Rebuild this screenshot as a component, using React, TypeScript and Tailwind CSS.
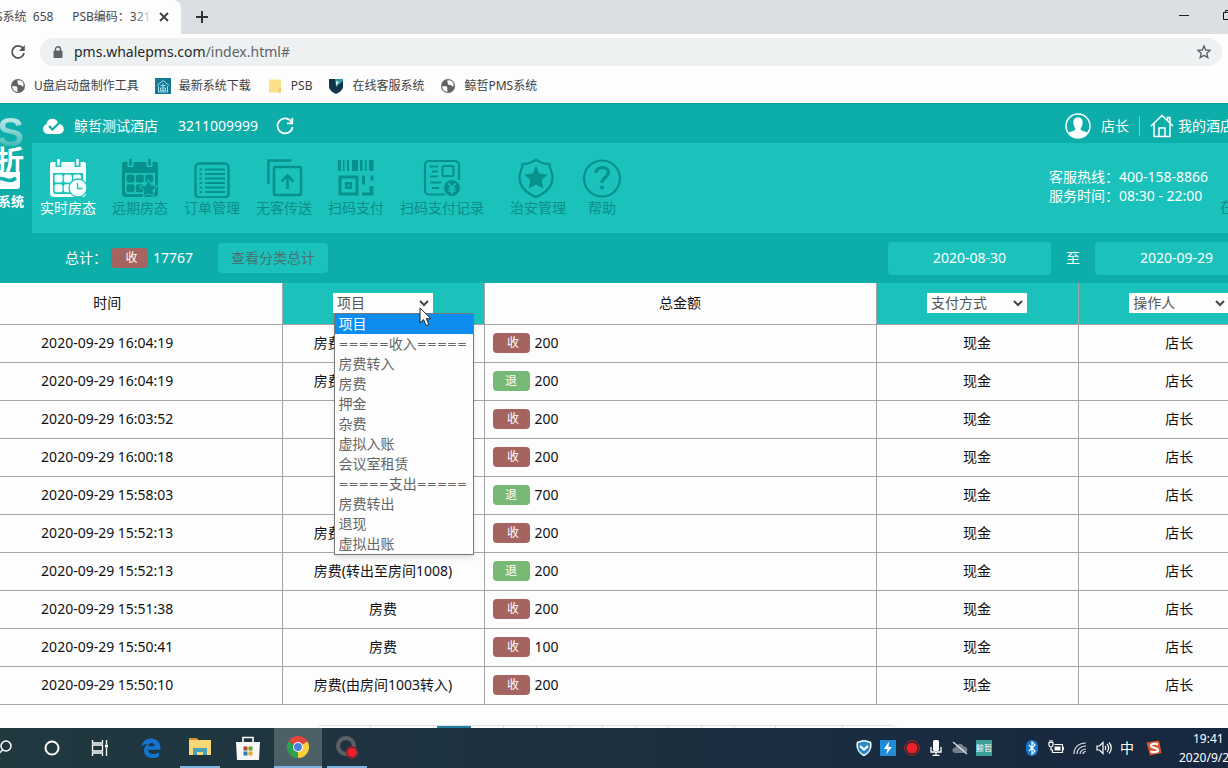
import type { ReactNode } from 'react';

const D = '#06918d';

type Row = { time: string; item: string; kind: 'in' | 'out'; amount: number };

const rows: Row[] = [
  { time: '2020-09-29 16:04:19', item: '房费(由房间1008转入)', kind: 'in', amount: 200 },
  { time: '2020-09-29 16:04:19', item: '房费(转出至房间1003)', kind: 'out', amount: 200 },
  { time: '2020-09-29 16:03:52', item: '房费', kind: 'in', amount: 200 },
  { time: '2020-09-29 16:00:18', item: '房费', kind: 'in', amount: 200 },
  { time: '2020-09-29 15:58:03', item: '退现', kind: 'out', amount: 700 },
  { time: '2020-09-29 15:52:13', item: '房费(由房间1003转入)', kind: 'in', amount: 200 },
  { time: '2020-09-29 15:52:13', item: '房费(转出至房间1008)', kind: 'out', amount: 200 },
  { time: '2020-09-29 15:51:38', item: '房费', kind: 'in', amount: 200 },
  { time: '2020-09-29 15:50:41', item: '房费', kind: 'in', amount: 100 },
  { time: '2020-09-29 15:50:10', item: '房费(由房间1003转入)', kind: 'in', amount: 200 },
];

const options = ['项目', '=====收入=====', '房费转入', '房费', '押金', '杂费', '虚拟入账', '会议室租赁', '=====支出=====', '房费转出', '退现', '虚拟出账'];

function Globe() {
  return (
    <svg className="size-4 shrink-0" viewBox="0 0 16 16">
      <circle cx="8" cy="8" r="7" fill="#5f6368" />
      <path d="M2.500 7.500c1.500 1.500 3.500 0 4.500 1.500s-.5 2.500 1 4.700c-3.500.4-6.200-2.600-5.500-6.200zM7.500 2.500c2-.8 4.500.3 5.500 2 .8 1.300.7 3 0 4.200-1-.2-1.500-1.500-2.800-1.600-1.600-.1-2.800-.6-2.400-1.800.2-.8-1-1.800-.3-2.800z" fill="#fdfdfd" />
    </svg>
  );
}

function Bookmark({ icon, label }: { icon: ReactNode; label: string }) {
  return (
    <a href="#" className="flex items-center gap-2">
      {icon}
      <span>{label}</span>
    </a>
  );
}

function Browser() {
  return (
    <div className="shrink-0 bg-[#fdfdfd]">
      <div className="flex h-[34px] bg-[#dbdfe3]">
        <div className="flex w-[181px] shrink-0 items-center rounded-tr-lg bg-[#fdfdfd]">
          <span className="-ml-1 flex w-[154px] items-center overflow-hidden whitespace-pre text-xs text-[#45494d]">
            <span>S系统  658      PSB编码：3</span>
            <span className="text-[#85888b]">2</span>
            <span className="text-[#c5c7c9]">1</span>
          </span>
          <button aria-label="关闭标签页" className="ml-2">
            <svg className="size-3" viewBox="0 0 12 12" stroke="#3c4043" strokeWidth="1.800"><path d="M2 2l8 8M10 2l-8 8" /></svg>
          </button>
        </div>
        <button aria-label="新标签页" className="ml-3.5">
          <svg className="size-3.5" viewBox="0 0 14 14" stroke="#303336" strokeWidth="2"><path d="M7 1v12M1 7h12" /></svg>
        </button>
        <div className="flex-1" />
        <button aria-label="最小化" className="mb-1 mr-8">
          <svg className="size-3" viewBox="0 0 12 12" stroke="#222"><path d="M1 6.500h10" /></svg>
        </button>
        <button aria-label="还原" className="-mr-1.5 mb-1">
          <svg className="size-3" viewBox="0 0 12 12" fill="none" stroke="#111"><path d="M1.500 3.500h7v7h-7zM3.500 3.500v-2h7v7h-2" /></svg>
        </button>
      </div>
      <div className="flex h-9 items-center pl-2.5 pr-1.5">
        <button aria-label="重新加载" className="mr-3.5">
          <svg className="size-4" viewBox="0 0 16 16" fill="none" stroke="#54585c" strokeWidth="1.800"><path d="M13 4.500A6 6 0 1 0 14 9" /><path d="M14.800 1v6H8.800z" fill="#54585c" stroke="none" /></svg>
        </button>
        <div className="flex h-7 flex-1 items-center rounded-full bg-[#edf1f2] pl-[13px] pr-2.5">
          <svg className="mr-[11px] h-3 w-2.5" viewBox="0 0 10 12"><rect x="0.500" y="4.500" width="9" height="7.500" rx="1" fill="#5f6368" /><path d="M2.500 5V3.200a2.500 2.500 0 0 1 5 0V5" fill="none" stroke="#5f6368" strokeWidth="1.400" /></svg>
          <span className="flex-1 text-sm text-[#5f6368]"><span className="text-[#25282b]">pms.whalepms.com</span>/index.html#</span>
          <button aria-label="收藏">
            <svg className="size-4" viewBox="0 0 16 16" fill="none" stroke="#5f6368" strokeWidth="1.400"><path d="M8 2l1.700 4 4.300.4-3.200 2.900 1 4.200L8 11.300l-3.800 2.200 1-4.200L2 6.400 6.300 6z" /></svg>
          </button>
        </div>
      </div>
      <div className="flex h-[33px] items-center gap-4 pb-0.5 pl-2.5 text-xs text-[#3c4043]">
        <Bookmark icon={<Globe />} label="U盘启动盘制作工具" />
        <Bookmark icon={<svg className="size-4" viewBox="0 0 16 16" fill="none" stroke="#a4dded"><rect width="16" height="16" fill="#157796" stroke="none" /><path d="M2 7.500l6-5 6 5M3.500 8v6h9V8M5.500 7.500h5M5.500 10h5v2.500h-5zM8 5.500v7" /></svg>} label="最新系统下载" />
        <Bookmark icon={<svg className="size-4" viewBox="0 0 16 16"><path d="M2 1.500h12v13H2z" fill="#fbe08a" /><path d="M12.500 10H14v4.500h-3z" fill="#eecd6a" /></svg>} label="PSB" />
        <Bookmark icon={<svg className="size-4" viewBox="0 0 16 16"><path d="M1 1h14v7c0 4-3 6-7 8-4-2-7-4-7-8z" fill="#12344a" /><path d="M7 1h8v2L8 9z" fill="#2e9aa0" /><path d="M8 3v5l3-4z" fill="#d6f3f2" /></svg>} label="在线客服系统" />
        <Bookmark icon={<Globe />} label="鲸哲PMS系统" />
      </div>
    </div>
  );
}

function Calendar({ color, star }: { color: string; star?: boolean }) {
  return (
    <svg className="size-10" viewBox="0 0 40 40">
      <path d="M2 6a2 2 0 0 1 2-2h32a2 2 0 0 1 2 2v29a4 4 0 0 1-4 4H6a4 4 0 0 1-4-4z" fill={color} />
      <path d="M7.500 3h6v6h-6zM26.500 3h6v6h-6z" fill="#1bc2bc" />
      <path d="M9.200 1h2.600v6.500H9.200zM28.200 1h2.600v6.500h-2.600z" fill={color} />
      <path d="M5 15h30v18a3 3 0 0 1-3 3H8a3 3 0 0 1-3-3z" fill="#1bc2bc" />
      {[0, 1, 2].map((i) => [0, 1].map((j) => <rect key={`${i}${j}`} x={6.500 + i * 9.300} y={16.500 + j * 9.700} width="8" height="8" rx="2" fill={color} />))}
      {star ? (
        <path d="M28.500 22.500l2.400 5.100 5.600.7-4.100 3.900 1 5.500-4.900-2.700-4.900 2.700 1-5.500-4.100-3.900 5.600-.7z" fill={color} stroke="#1bc2bc" strokeWidth="1.600" paintOrder="stroke" />
      ) : (
        <g><circle cx="30" cy="30" r="9" fill={color} stroke="#1bc2bc" strokeWidth="1.300" /><path d="M29.500 25v5.500h5" fill="none" stroke="#1bc2bc" strokeWidth="1.300" /></g>
      )}
    </svg>
  );
}

const nav: { label: string; gap: string; icon: ReactNode }[] = [
  { label: '实时房态', gap: 'ml-2', icon: <Calendar color="#f4ffff" /> },
  { label: '远期房态', gap: 'ml-4', icon: <Calendar color={D} star /> },
  { label: '订单管理', gap: 'ml-4', icon: <svg className="size-10" viewBox="0 0 40 40" fill="none" stroke={D} strokeWidth="2.500"><rect x="3.500" y="5.500" width="33" height="34" rx="4" /><path d="M13 11.500H33M13 16H33M13 20.500H33M13 25H33M13 29.500H33M13 34H33" strokeWidth="1.900" /><path d="M7.500 11.500H10M7.500 16H10M7.500 20.500H10M7.500 25H10M7.500 29.500H10M7.500 34H10" strokeWidth="2.200" /></svg> },
  { label: '无客传送', gap: 'ml-4', icon: <svg className="size-10" viewBox="0 0 40 40" fill="none" stroke={D} strokeWidth="2.600"><path d="M4.500 26V2.500h23" /><rect x="10" y="9" width="27" height="28" rx="1.500" /><path d="M23.500 31V18M17.500 23.500l6-6 6 6" /></svg> },
  { label: '扫码支付', gap: 'ml-4', icon: <svg className="size-10" viewBox="0 0 40 40" fill={D}><path d="M2 2h3v11H2zM7 2h1.500v11H7zM11 2h2v11h-2zM16 2h6v11h-6zM24 2h2.500v11H24zM29 2h1.500v11H29zM33 2h4.500v11H33z" /><path d="M4 19h17v17H4z" fill="none" stroke={D} strokeWidth="3" /><path d="M10.200 25.200h4.600v4.600h-4.600z" fill="none" stroke={D} strokeWidth="2.500" /><path d="M26 17.500h3v9h-3zM26 34.500h7.500V28h4v9.500H26zM34.500 17.500h3v5h-3z" /></svg> },
  { label: '扫码支付记录', gap: 'ml-4', icon: <svg className="size-10" viewBox="0 0 40 40" fill="none" stroke={D} strokeWidth="2.200"><path d="M23 36.500H7a4 4 0 0 1-4-4V7a4 4 0 0 1 4-4h26a4 4 0 0 1 4 4v15" /><rect x="20.500" y="8" width="11" height="10" rx="1.500" /><path d="M8 8.500h8M10 13.500h6M8 18.500h8M8 24.500h11M10 30h7" /><circle cx="30" cy="30" r="8" fill={D} stroke="none" /><path d="M26.500 25.500l3.500 4.500 3.500-4.500M30 30v6M26.500 30.500h7M26.500 33h7" stroke="#1bc2bc" strokeWidth="1.500" /></svg> },
  { label: '治安管理', gap: 'ml-[26px]', icon: <svg className="size-10 -translate-x-0.5" viewBox="0 0 40 40"><path d="M20 1.500c4 3.300 8.500 4.500 13.500 4.500 0 6 3 7 3 13 0 9-6.500 16-16.500 20C10 35 3.500 28 3.500 19c0-6 3-7 3-13 5 0 9.500-1.200 13.500-4.500z" fill="none" stroke={D} strokeWidth="2.200" /><path d="M20 8l3.500 7.500 8.200 1-6 5.700 1.600 8.200L20 26.400l-7.300 4 1.600-8.200-6-5.700 8.200-1z" fill={D} /></svg> },
  { label: '帮助', gap: 'ml-4', icon: <svg className="size-10" viewBox="0 0 40 40" fill="none" stroke={D}><circle cx="20" cy="20.500" r="18" strokeWidth="2.200" /><path d="M14 15c0-7.500 12.500-7 12.500-.5 0 5-6.500 4.800-6.500 10.500" strokeWidth="3.200" /><circle cx="20" cy="29.500" r="2.100" fill={D} stroke="none" /></svg> },
];

function Header() {
  return (
    <header className="flex h-[130px] shrink-0 border-t border-[#0f9f9c] bg-[#0dadaa] text-sm text-white">
      <div className="flex w-8 shrink-0 flex-col items-end overflow-hidden whitespace-nowrap pr-2 pt-3">
        <span className="h-8 bg-linear-to-b from-[#c5eeec] to-[#2bb7b4] bg-clip-text font-[Liberation_Sans,sans-serif] text-[40px]/8 font-bold text-transparent">PMS</span>
        <span className="h-6 text-[28px]/6 font-bold">折</span>
        <svg className="mr-1 h-[17px] w-10" viewBox="0 0 40 17"><path d="M0 0h40v14a3 3 0 0 1-3 3H0z" fill="#fff" /><path d="M15 9c8-7 12 4 21-3" fill="none" stroke="#0dadaa" strokeWidth="3.500" /></svg>
        <span className="mt-1 text-[13px]/4 font-bold">管理系统</span>
      </div>
      <div className="flex min-w-0 flex-1 flex-col">
        <div className="flex h-[39px] shrink-0 items-center whitespace-nowrap pl-2.5 pt-1">
          <svg className="size-[22px]" viewBox="0 0 22 22"><path d="M5.500 19a5 5 0 0 1-1-9.700C5 2.500 14 2 16 7.500c1 .2 1.500.8 1.500 1.500C23.500 10 23 19 17 19z" fill="#fff" /><path d="M7 11l3.500 3.500L18 7" fill="none" stroke="#0dadaa" strokeWidth="2.200" /></svg>
          <span className="ml-2.5">鲸哲测试酒店</span>
          <span className="ml-5">3211009999</span>
          <button aria-label="刷新" className="ml-[18px]"><svg className="size-[18px]" viewBox="0 0 18 18" fill="none" stroke="#fff" strokeWidth="1.800"><path d="M15.500 5A7.500 7.500 0 1 0 16.500 10" /><path d="M16.300 1v5.300H11" /></svg></button>
          <div className="flex-1" />
          <svg className="size-[26px]" viewBox="0 0 26 26"><circle cx="13" cy="13" r="12" fill="none" stroke="#fff" strokeWidth="1.500" /><path d="M13 4.500c4 0 5 3 4.500 6-.2 2.500-1 4-2 5 .2 3 5.500 2.500 7 4.500-4.500 6.500-14.500 6.500-19 0 1.500-2 6.800-1.500 7-4.500-1-1-1.800-2.500-2-5-.5-3 .5-6 4.500-6z" fill="#fff" /></svg>
          <span className="ml-2.5">店长</span>
          <span className="mx-2.5 h-5 w-px bg-[#6ccfcc]" />
          <svg className="size-6" viewBox="0 0 24 24" fill="none" stroke="#fff" strokeWidth="1.500"><path d="M1 12L12 1.500 23 12M4 9.500V22.500h16V9.500M9 22.500V14h6v8.500M17.500 7V3.500H20V9" /></svg>
          <span className="-mr-1.5 ml-1">我的酒店</span>
        </div>
        <nav className="flex min-h-0 flex-1 bg-[#1bc2bc]">
          {nav.map((n, i) => (
            <a key={n.label} href="#" className={`${n.gap} flex shrink-0 flex-col items-center pt-[15px] ${i ? 'text-[#0b8d89]' : 'text-white'}`}>
              {n.icon}
              <span className="leading-5">{n.label}</span>
            </a>
          ))}
          <div className="flex-1" />
          <div className="w-[163px] shrink-0 pt-6 leading-[19px]">
            <div>客服热线：400-158-8866</div>
            <div>服务时间：08:30 - 22:00</div>
          </div>
          <span className="-mr-1.5 ml-2 shrink-0 pt-[54px] text-[#0b8d89]">在</span>
        </nav>
      </div>
    </header>
  );
}

function Filter({ label, id }: { label: string; id: string }) {
  return (
    <div className="relative mx-auto w-[100px]">
      <select id={id} aria-label={label} className="block h-5 w-full appearance-none bg-[#fdfdfd] pl-1 text-sm/5 font-normal text-[#555]">
        <option>{label}</option>
      </select>
      <svg className="pointer-events-none absolute right-1 top-1.5 h-2 w-2.5" viewBox="0 0 10 8" fill="none" stroke="#444" strokeWidth="2"><path d="M1 2l4 4 4-4" /></svg>
    </div>
  );
}

function OptionText({ text }: { text: string }) {
  if (!text.startsWith('=')) return <>{text}</>;
  return (
    <span className="flex items-center">
      <span className="font-[DejaVu_Sans,sans-serif] text-xs/5">=====</span>
      {text.replaceAll('=', '')}
      <span className="font-[DejaVu_Sans,sans-serif] text-xs/5">=====</span>
    </span>
  );
}

function Tag({ kind }: { kind: 'in' | 'out' }) {
  return kind === 'in'
    ? <span className="inline-block h-5 w-[37px] rounded bg-[#a5645f] pl-1 text-center text-xs/5 text-white">收</span>
    : <span className="inline-block h-5 w-[37px] rounded bg-[#77b974] text-center text-xs/5 text-white">退</span>;
}

function Ledger() {
  return (
    <div className="-ml-[67px] -mr-[52px]">
      <table className="w-full table-fixed border-collapse text-center text-sm text-[#111]">
        <colgroup><col className="w-[349px]" /><col className="w-[202px]" /><col /><col className="w-[202px]" /><col className="w-[202px]" /></colgroup>
        <thead>
          <tr className="h-[41px] border-b border-[#a5a5a5]">
            <th className="border-r border-[#a5a5a5] font-normal">时间</th>
            <th className="border-r border-[#a5a5a5] bg-[#1bc2bc]">
              <div className="relative">
                <Filter id="item" label="项目" />
                <ul role="listbox" aria-label="项目" className="absolute left-[51px] top-5 z-10 w-[140px] border border-[#777] bg-[#fdfdfd] text-left text-sm/5 font-normal text-[#666] shadow-md">
                  {options.map((o, i) => (
                    <li key={o} role="option" aria-selected={i === 0} className={`h-5 whitespace-nowrap pl-1 ${i === 0 ? 'bg-[#0d8df0] text-white' : ''}`}><OptionText text={o} /></li>
                  ))}
                </ul>
                <svg className="absolute left-[136px] top-3.5 z-20 h-5 w-3.5" viewBox="0 0 14 20"><path d="M1 1v15l3.600-3.400 2.500 6 2.700-1.100-2.500-5.800H12z" fill="#fff" stroke="#222" /></svg>
              </div>
            </th>
            <th className="border-r border-[#a5a5a5] font-normal">总金额</th>
            <th className="border-r border-[#a5a5a5] bg-[#1bc2bc]"><Filter id="pay" label="支付方式" /></th>
            <th className="bg-[#1bc2bc]"><Filter id="operator" label="操作人" /></th>
          </tr>
        </thead>
        <tbody>
          {rows.map((r, i) => (
            <tr key={i} className="h-[38px] border-b border-[#a5a5a5]">
              <td className="border-r border-[#a5a5a5]">{r.time}</td>
              <td className="border-r border-[#a5a5a5]">{r.item}</td>
              <td className="border-r border-[#a5a5a5]"><div className="flex items-center gap-[5px] pl-2"><Tag kind={r.kind} />{r.amount}</div></td>
              <td className="border-r border-[#a5a5a5]">现金</td>
              <td>店长</td>
            </tr>
          ))}
        </tbody>
      </table>
    </div>
  );
}

function Taskbar() {
  return (
    <footer className="flex h-10 shrink-0 items-center bg-linear-to-r from-[#21383f] to-[#17273f] text-white">
      <button aria-label="搜索" className="-ml-1 w-4"><svg className="size-4" viewBox="0 0 16 16" fill="none" stroke="#fff" strokeWidth="1.500"><circle cx="10" cy="6" r="5" /><path d="M6.500 10L1 15.500" /></svg></button>
      <button aria-label="Cortana" className="ml-4 flex w-12 justify-center"><svg className="size-4" viewBox="0 0 16 16" fill="none" stroke="#fff" strokeWidth="2"><circle cx="8" cy="8" r="6.500" /></svg></button>
      <button aria-label="任务视图" className="flex w-12 justify-center"><svg className="size-[18px]" viewBox="0 0 18 18" fill="none" stroke="#fff" strokeWidth="1.300"><path d="M1.500 1v3h10V1M1.500 17v-3h10v3M1.500 6h10v6h-10zM15.500 1v4M15.500 9v8" /><path d="M14 5.500h3v3h-3z" fill="#fff" stroke="none" /></svg></button>
      <button aria-label="Edge" className="ml-[3px] flex w-12 justify-center"><svg className="size-5" viewBox="0 0 20 20"><path d="M.5 9C1 3.500 5 .5 10 .5c6 0 9.500 4 9.500 9v2.200H7.200c0 3 2.500 4.200 5.300 4.200 2.300 0 4-.6 5.500-1.400v4c-2 1-4 1.500-6.500 1.500C6 20 3 17 3 12.500c0-3 1.500-5.200 4-6.500C4 6 1.800 7 .5 9zM7.300 8.200h6.200c0-2-1-3.300-3-3.300S7.500 6.300 7.300 8.200z" fill="#1473cf" /></svg></button>
      <button aria-label="文件资源管理器" className="ml-[5px] flex h-full w-10 items-center justify-center border-b-2 border-[#7fb4e3]"><svg className="h-5 w-[22px]" viewBox="0 0 22 20"><path d="M0 1h8l1.500 2H0z" fill="#d9932b" /><path d="M0 3h22v15H0z" fill="#f8d775" /><path d="M4 18v-7h14v7h-4v-3H8v3z" fill="#4ba0b8" /></svg></button>
      <button aria-label="Microsoft Store" className="ml-1 flex w-12 justify-center"><svg className="size-6" viewBox="0 0 24 24"><path d="M7 8V1.500h10V8" fill="none" stroke="#fff" strokeWidth="1.600" /><path d="M0 6h24l-1 18H1z" fill="#f7f7f7" /><path d="M7.500 10.500h4v4h-4z" fill="#b34a26" /><path d="M12.500 10.500h4v4h-4z" fill="#6f9e28" /><path d="M7.500 15.500h4v4h-4z" fill="#267fb3" /><path d="M12.500 15.500h4v4h-4z" fill="#e6ac1c" /></svg></button>
      <button aria-label="Chrome" className="ml-0.5 flex h-full w-12 items-center justify-center border-b-2 border-[#7fb4e3] bg-[#4c6066]"><svg className="size-[22px]" viewBox="0 0 24 24"><path d="M12 12L1.600 6A12 12 0 0 1 22.400 6z" fill="#e2453a" /><path d="M12 12V24A12 12 0 0 1 1.600 6z" fill="#2da350" /><path d="M12 12l10.400-6A12 12 0 0 1 12 24z" fill="#fbce3c" /><circle cx="12" cy="12" r="5.500" fill="#fff" /><circle cx="12" cy="12" r="4.300" fill="#4b80dc" /></svg></button>
      <button aria-label="录屏" className="ml-[5px] flex h-full w-10 items-center justify-center border-b-2 border-[#7fb4e3]"><svg className="size-6" viewBox="0 0 24 24"><circle cx="11" cy="11" r="8" fill="none" stroke="#5c6063" strokeWidth="4" /><circle cx="17" cy="17.500" r="6" fill="#21383f" stroke="#b5232b" /><circle cx="17" cy="17.500" r="4.700" fill="#f0202a" /></svg></button>
      <div className="flex-1" />
      <div className="flex items-center gap-2">
        <svg className="size-4" viewBox="0 0 16 16"><path d="M8 .5l6.500 2C16 9 12 13.500 8 15.500 4 13.500 0 9 1.500 2.500z" fill="#2f86c4" stroke="#e9f6ff" strokeWidth="1.600" /><path d="M4 6l4 3.500L12 6" fill="none" stroke="#fff" strokeWidth="2.200" /></svg>
        <svg className="size-4" viewBox="0 0 16 16"><path d="M0 0h16v16H0z" fill="#208cd8" /><path d="M9 1.500L4 9h3.500L6 14.500 12 7H8.500z" fill="#fff" /></svg>
        <svg className="size-4" viewBox="0 0 16 16"><circle cx="8" cy="8" r="7.300" fill="#21232f" stroke="#ac2931" /><circle cx="8" cy="8" r="5.600" fill="#e8202a" /></svg>
        <svg className="size-4" viewBox="0 0 16 16"><rect x="5" width="6" height="11" rx="1.500" fill="#fff" /><path d="M3 7v5h10V7M8 12v3M4.500 15.300h7" fill="none" stroke="#fff" strokeWidth="1.300" /></svg>
        <svg className="size-4" viewBox="0 0 16 16"><path d="M3 13C-1 12 0 7 3.500 7.500 5 2 11 3 11.500 6.500c5 0 5 6.500 1 6.500z" fill="#75808b" /><path d="M1 2l14 12" stroke="#e1e5e9" strokeWidth="1.200" /></svg>
        <span className="flex size-4 items-center justify-center overflow-hidden whitespace-nowrap bg-[#3c9d99] text-[8px]/4">鲸哲</span>
      </div>
      <div className="ml-8 flex items-center gap-2">
        <svg className="size-4" viewBox="0 0 16 16"><rect x="2" width="12" height="16" rx="6" fill="#1477cf" /><path d="M5 5l6 6-3 3V2l3 3-6 6" fill="none" stroke="#fff" strokeWidth="1.200" /></svg>
        <svg className="size-4" viewBox="0 0 16 16" fill="none" stroke="#fff" strokeWidth="1.200"><path d="M6.500 4.500h8v8h-10V10M15.500 7v3M1 2.500V5a2 2 0 0 0 4 0V2.500zM2 2.500V0M4 2.500V0M3 7v3h2" /><path d="M6.500 6.500h6v4h-6z" fill="#fff" stroke="none" /></svg>
        <svg className="size-4" viewBox="0 0 16 16" fill="none" stroke="#d9dfe5" strokeWidth="1.200"><path d="M2 14C2 7 7 3 14 3M5 14c0-5 4-8 9-8M8 14c0-3 3-5 6-5M11 14c0-1.500 1-2.500 3-2.500" /></svg>
        <svg className="size-4" viewBox="0 0 16 16" fill="none" stroke="#fff" strokeWidth="1.200"><path d="M1 6h2.500L7 2.500v11L3.500 10H1zM9 6c1 1 1 3 0 4M11 4c2.200 2 2.200 6 0 8M13 2.500c3 3 3 8 0 11" /></svg>
        <span className="text-sm">中</span>
        <svg className="ml-1 size-4" viewBox="0 0 16 16"><path d="M.5 2.500L13 .5 15.500 13 4 15.500z" fill="#df552b" /><path d="M12 4.500C9 3 5 3.500 5 5.700S12 7.500 12 10 7.500 12.500 4.500 11.500" fill="none" stroke="#fff" strokeWidth="2.200" /></svg>
      </div>
      <div className="-mr-4 ml-[17px] flex w-[65px] flex-col text-xs">
        <span className="h-[19px] pl-3.5 leading-[19px]">19:41</span>
        <span className="h-[19px] leading-[19px]">2020/9/29</span>
      </div>
    </footer>
  );
}

export default function App() {
  return (
    <div className="flex h-screen flex-col overflow-hidden bg-[#fdfdfd] font-[Noto_Sans,Noto_Sans_CJK_SC,sans-serif]">
      <Browser />
      <Header />
      <section className="flex h-[50px] shrink-0 items-center whitespace-nowrap bg-[#0dadaa] pl-[65px] text-sm text-white">
        <span>总计：</span>
        <span className="ml-1 mr-[5px] flex"><Tag kind="in" /></span>
        <span>17767</span>
        <button className="ml-[25px] h-[30px] rounded bg-[#1bc2bc] px-[13px] text-[#49716f]">查看分类总计</button>
        <div className="flex-1" />
        <button className="h-[33px] w-[163px] rounded bg-[#1bc2bc]">2020-08-30</button>
        <span className="mx-[15px]">至</span>
        <button className="-mr-[30px] h-[33px] w-[163px] rounded bg-[#1bc2bc]">2020-09-29</button>
      </section>
      <main className="flex min-h-0 flex-1 flex-col overflow-hidden">
        <Ledger />
        <div className="mt-5 flex shrink-0 justify-center pr-3.5">
          <div className="flex h-8 rounded border border-[#dfe2e5]">
            <span className="w-[53px] border-r border-[#dfe2e5]" />
            <span className="w-[66px]" />
            <span className="w-[34px] bg-[#267f9f]" />
            {[0, 1, 2, 3, 4, 5, 6, 7].map((n) => <span key={n} className="w-[33px] border-r border-[#dfe2e5]" />)}
            <span className="w-[41px] border-r border-[#dfe2e5]" />
            <span className="w-[67px] border-r border-[#dfe2e5]" />
            <span className="w-[53px]" />
          </div>
        </div>
      </main>
      <Taskbar />
    </div>
  );
}
